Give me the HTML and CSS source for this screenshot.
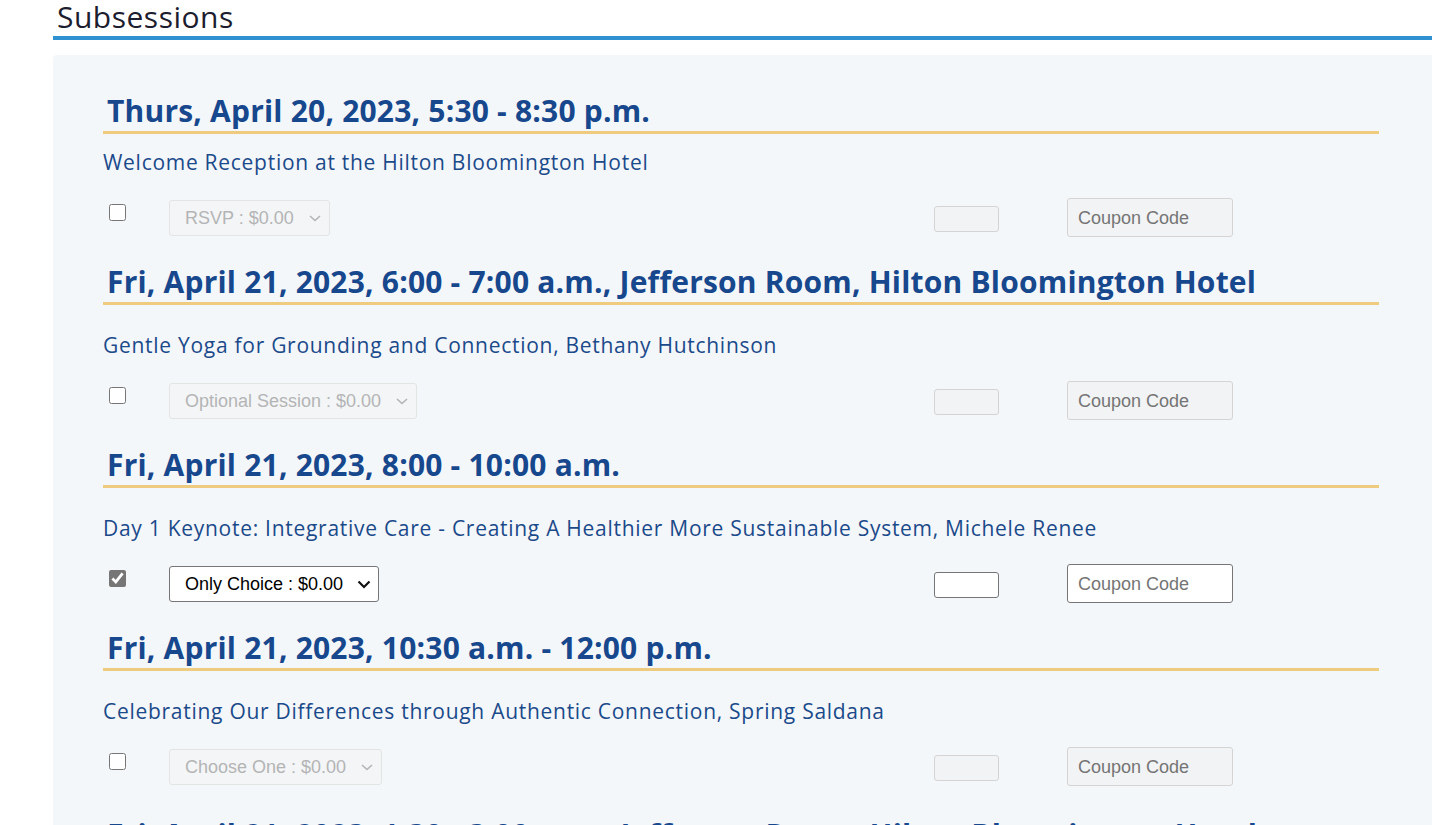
FILE: index.html
```html
<!DOCTYPE html>
<html lang="en">
<head>
<meta charset="utf-8">
<title>Subsessions</title>
<link rel="stylesheet" href="styles.css">
</head>
<body>
<div class="page">
  <h2 class="title">Subsessions</h2>
  <div class="panel">
    <section class="session">
      <h3 class="session-head">Thurs, April 20, 2023, 5:30 - 8:30 p.m.</h3>
      <p class="session-desc first">Welcome Reception at the Hilton Bloomington Hotel</p>
      <div class="session-row">
        <input type="checkbox" class="pick">
        <div class="sel-cell"><select class="option" disabled><option>RSVP : $0.00</option></select></div>
        <input type="text" class="qty" disabled>
        <input type="text" class="coupon" placeholder="Coupon Code" disabled>
      </div>
    </section>
    <section class="session">
      <h3 class="session-head">Fri, April 21, 2023, 6:00 - 7:00 a.m., Jefferson Room, Hilton Bloomington Hotel</h3>
      <p class="session-desc">Gentle Yoga for Grounding and Connection, Bethany Hutchinson</p>
      <div class="session-row">
        <input type="checkbox" class="pick">
        <div class="sel-cell"><select class="option" disabled><option>Optional Session : $0.00</option></select></div>
        <input type="text" class="qty" disabled>
        <input type="text" class="coupon" placeholder="Coupon Code" disabled>
      </div>
    </section>
    <section class="session">
      <h3 class="session-head">Fri, April 21, 2023, 8:00 - 10:00 a.m.</h3>
      <p class="session-desc">Day 1 Keynote: Integrative Care - Creating A Healthier More Sustainable System, Michele Renee</p>
      <div class="session-row">
        <input type="checkbox" class="pick" checked>
        <div class="sel-cell"><select class="option"><option>Only Choice : $0.00</option></select></div>
        <input type="text" class="qty">
        <input type="text" class="coupon" placeholder="Coupon Code">
      </div>
    </section>
    <section class="session">
      <h3 class="session-head">Fri, April 21, 2023, 10:30 a.m. - 12:00 p.m.</h3>
      <p class="session-desc">Celebrating Our Differences through Authentic Connection, Spring Saldana</p>
      <div class="session-row">
        <input type="checkbox" class="pick">
        <div class="sel-cell"><select class="option" disabled><option>Choose One : $0.00</option></select></div>
        <input type="text" class="qty" disabled>
        <input type="text" class="coupon" placeholder="Coupon Code" disabled>
      </div>
    </section>
    <section class="session late">
      <h3 class="session-head">Fri, April 21, 2023, 1:30 - 3:00 p.m., Jefferson Room, Hilton Bloomington Hotel</h3>
      <p class="session-desc">Afternoon Breakout Sessions</p>
    </section>
  </div>
</div>
</body>
</html>
```

FILE: styles.css
```css
html, body {
  margin: 0;
  padding: 0;
  background: #ffffff;
  overflow: hidden;
}
body {
  font-family: "Open Sans", "Lato", sans-serif;
}
.page {
  margin-left: 53px;
}
.title {
  margin: 0;
  padding-left: 4px;
  height: 36px;
  line-height: 34px;
  font-size: 30px;
  font-weight: 400;
  letter-spacing: 0.5px;
  color: #1c1d2e;
  border-bottom: 4px solid #2f91cf;
  box-sizing: content-box;
}
.panel {
  margin-top: 15px;
  background: #f4f7fa;
  padding: 38px 53px 40px 50px;
  border-top-left-radius: 4px;
}
.session.late {
  padding-top: 4px;
}
.session-head {
  margin: 0;
  padding: 0 0 2px 4px;
  line-height: 36px;
  font-size: 30px;
  font-weight: 700;
  letter-spacing: 0.2px;
  color: #17478c;
  border-bottom: 3px solid #efcb7f;
  white-space: nowrap;
}
.session-desc {
  margin: 26px 0 0 0;
  line-height: 28px;
  font-size: 21px;
  color: #1b4a8a;
  letter-spacing: 0.72px;
}
.session-desc.first {
  margin-top: 14px;
}
.session-row {
  display: grid;
  grid-template-columns: 66px 765px 133px 166px;
  align-items: start;
  margin-top: 22px;
  margin-bottom: 27px;
  height: 39px;
}
.pick {
  width: 17px;
  height: 17px;
  margin: 6px 0 0 6px;
  accent-color: #767676;
}
.sel-cell {
  padding-top: 2px;
}
.option {
  -webkit-appearance: none;
  appearance: none;
  box-sizing: border-box;
  height: 36px;
  font-family: "Liberation Sans", Arial, sans-serif;
  font-size: 18px;
  padding: 0 34px 0 15px;
  border: 1px solid #767676;
  border-radius: 3px;
  background-color: #ffffff;
  background-image: url("data:image/svg+xml,%3Csvg xmlns='http://www.w3.org/2000/svg' width='14' height='9' viewBox='0 0 14 9'%3E%3Cpath d='M1.5 1.5 L7 7 L12.5 1.5' fill='none' stroke='%23111' stroke-width='2.2'/%3E%3C/svg%3E");
  background-repeat: no-repeat;
  background-position: right 7px center;
  color: #000000;
}
.option:disabled {
  border-color: #dcdcdc;
  background-color: #f4f5f6;
  background-image: url("data:image/svg+xml,%3Csvg xmlns='http://www.w3.org/2000/svg' width='14' height='9' viewBox='0 0 14 9'%3E%3Cpath d='M2 2 L7 6.5 L12 2' fill='none' stroke='%23999' stroke-width='1.6'/%3E%3C/svg%3E");
  color: #999999;
}
.qty {
  box-sizing: border-box;
  width: 65px;
  height: 26px;
  margin-top: 8px;
  border: 1px solid #767676;
  border-radius: 3px;
  background: #ffffff;
  padding: 0 4px;
}
.qty:disabled {
  border-color: #d4d4d4;
  background: #f2f3f4;
}
.coupon {
  box-sizing: border-box;
  width: 166px;
  height: 39px;
  border: 1px solid #767676;
  border-radius: 3px;
  background: #ffffff;
  padding: 1px 10px 0 10px;
  font-family: "Liberation Sans", Arial, sans-serif;
  font-size: 18px;
}
.coupon:disabled {
  border-color: #d4d4d4;
  background: #f2f3f4;
}
.coupon::placeholder {
  color: #757575;
  opacity: 1;
}
```
